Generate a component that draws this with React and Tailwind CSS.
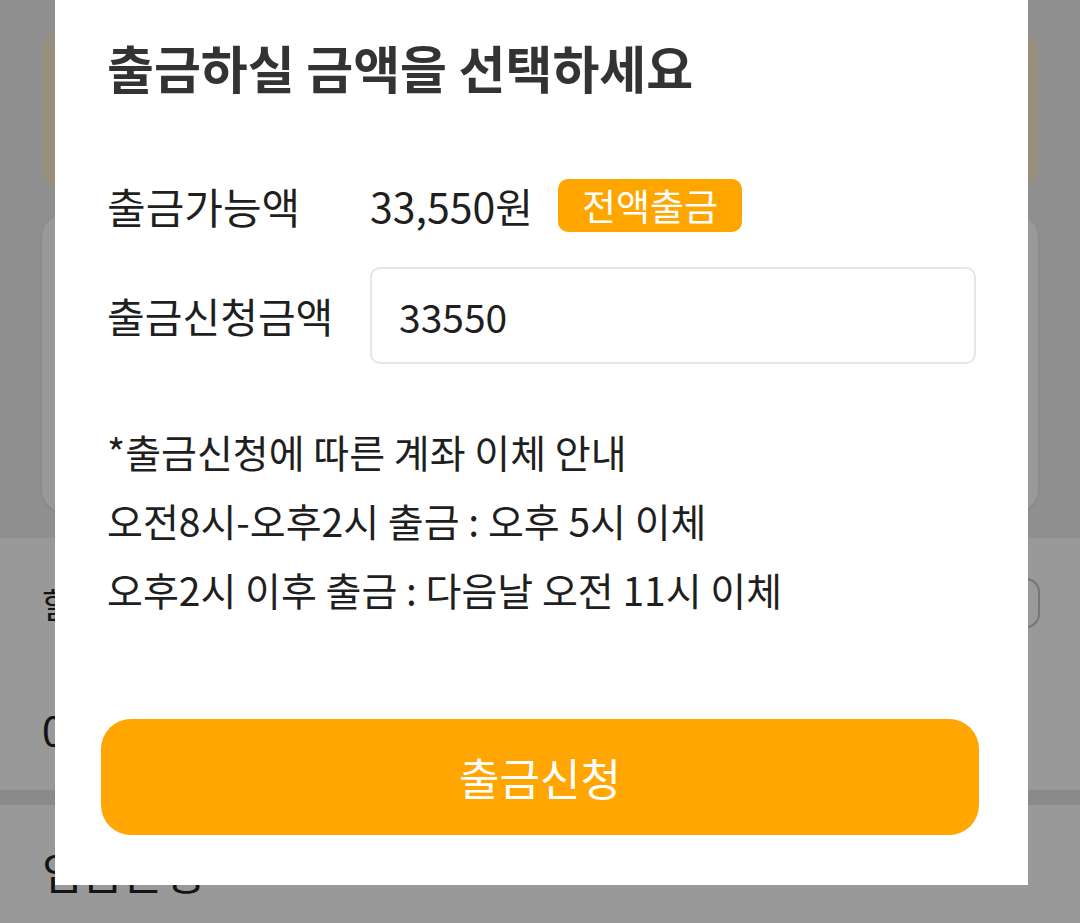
import { useState } from "react"

const font = { fontFamily: '"Noto Sans CJK KR", "Noto Sans", sans-serif' }

export default function App() {
  const [amount, setAmount] = useState("33550")

  return (
    <div className="relative w-full h-[923px] overflow-hidden bg-white" style={font}>
      {/* page underneath */}
      <div className="bg-[#eeeff0] px-[42px] pt-[30px] pb-[26px] flex flex-col gap-[25px]">
        <div className="h-[160px] rounded-[22px] bg-[#fdeed0]" />
        <div className="h-[297px] rounded-[22px] bg-white shadow-sm" />
      </div>
      <div className="bg-white">
        <div className="h-[130px] flex items-center justify-between pl-[42px] pr-[40px]">
          <span className="text-[34px] text-[#222]">할인</span>
          <div className="w-[120px] h-[50px] rounded-[14px] border-2 border-[#c4c4c4]" />
        </div>
        <div className="h-[122px] flex items-center pl-[42px]">
          <span className="text-[40px] text-[#222]">0원</span>
        </div>
      </div>
      <div className="h-[15px] bg-[#e4e7e9]" />
      <div className="bg-white h-[120px] flex items-center justify-between pl-[42px] pr-[70px]">
        <span className="text-[44px] text-[#222] mt-[12px]">입금은행</span>
        <span className="text-[40px] text-[#222] mt-[12px]">›</span>
      </div>

      {/* overlay */}
      <div className="absolute inset-0 bg-black/40" />

      {/* modal */}
      <div className="absolute left-[55px] top-0 w-[973px] h-[885px] bg-white text-[#1f1f1f]">
        <div className="px-[52px] pt-[37px]">
          <h2 className="text-[51px] leading-[60px] font-bold text-[#333]">
            출금하실 금액을 선택하세요
          </h2>

          <div className="mt-[82px] flex items-center h-[53px]">
            <span className="w-[263px] text-[42px] leading-none">출금가능액</span>
            <span className="text-[41px] leading-none">33,550원</span>
            <button className="ml-[25px] h-[53px] px-[24px] rounded-[10px] bg-[#ffa500] text-white text-[37px] leading-none">
              전액출금
            </button>
          </div>

          <div className="mt-[35px] flex items-center">
            <span className="w-[263px] text-[41px] leading-none">출금신청금액</span>
            <input
              value={amount}
              onChange={(e) => setAmount(e.target.value)}
              className="flex-1 h-[97px] rounded-[10px] border-2 border-[#e6e6e6] px-[27px] text-[39px] outline-none"
              style={font}
            />
          </div>

          <div className="mt-[53px] text-[39px] leading-[69px]">
            <p>*출금신청에 따른 계좌 이체 안내</p>
            <p>오전8시-오후2시 출금 : 오후 5시 이체</p>
            <p>오후2시 이후 출금 : 다음날 오전 11시 이체</p>
          </div>
        </div>

        <div className="pl-[46px] pr-[49px] mt-[95px]">
          <button className="w-full h-[116px] rounded-[30px] bg-[#ffa602] text-white text-[44px]">
            출금신청
          </button>
        </div>
      </div>
    </div>
  )
}
